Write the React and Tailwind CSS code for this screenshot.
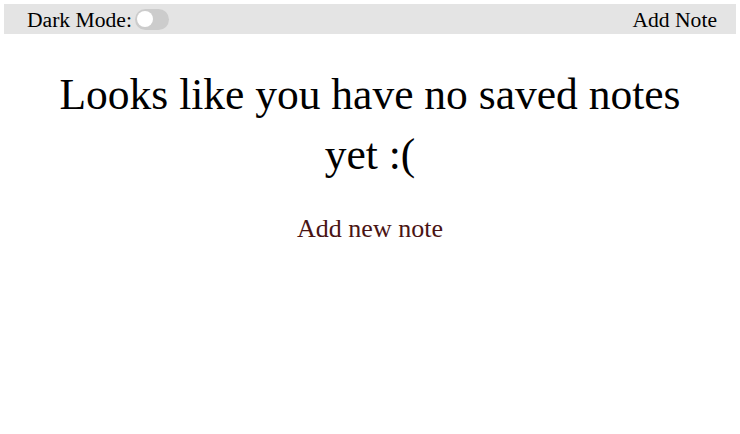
import React, { useState } from 'react';

const App = () => {
  const [dark, setDark] = useState(false);

  return (
    <div className="min-h-screen bg-white font-['Liberation_Serif',serif] text-black">
      <nav className="mx-1 mt-1 flex h-[30px] items-center justify-between bg-[#e4e4e4] pl-[23px] pr-[19px]">
        <div className="flex items-center">
          <span className="pt-[4px] text-[21.6px] leading-none">Dark Mode:</span>
          <button
            onClick={() => setDark(!dark)}
            className="ml-[3px] flex h-[21px] w-[34px] items-center rounded-full bg-[#cccccc] px-[2px]"
          >
            <span className="h-[16px] w-[16px] rounded-full bg-white" />
          </button>
        </div>
        <a className="pt-[4px] text-[21.6px] leading-none">Add Note</a>
      </nav>

      <main className="flex flex-col items-center px-8 pt-[30px] text-center">
        <h1 className="text-[43.5px] leading-[60px]">
          Looks like you have no saved notes yet :(
        </h1>
        <a className="mt-[25px] text-[26px] text-[#4a1414]">Add new note</a>
      </main>
    </div>
  );
};

export default App;
